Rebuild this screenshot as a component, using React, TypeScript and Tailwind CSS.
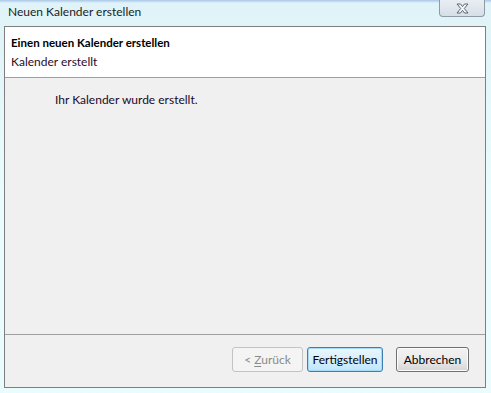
const FONT = { fontFamily: '"Segoe UI", Lato, "Noto Sans", sans-serif' }

function CloseIcon() {
  return (
    <svg width="13" height="11" viewBox="0 0 13 11">
      <path d="M1 1 L4.5 1 L6.5 3.6 L8.5 1 L12 1 L8.3 5.5 L12 10 L8.5 10 L6.5 7.4 L4.5 10 L1 10 L4.7 5.5 Z"
        fill="#f4f7f9" stroke="#5b6470" strokeWidth="1" strokeLinejoin="round" />
    </svg>
  )
}

export default function App() {
  return (
    <div className="relative w-[491px] h-[393px] overflow-hidden bg-gradient-to-b from-[#dff3f8] via-[#eafcfd] to-[#eafcfd] text-[12px] text-[#1e1e1e]" style={FONT}>
      {/* top glass strip */}
      <div className="absolute left-0 top-0 w-full h-[3px] bg-gradient-to-b from-[#a9c6e6] to-transparent" />

      {/* Title bar */}
      <div className="relative h-[26px] flex items-start">
        <span className="ml-[8px] mt-[3px] leading-[18px] text-[#1c1c1c]">Neuen Kalender erstellen</span>
        <div className="ml-auto mr-[6px] w-[46px] h-[17px] rounded-b-[4px] border border-t-0 border-[#8e9aa6] bg-gradient-to-b from-[#e8eef3] to-[#d6dee6] flex items-center justify-center">
          <CloseIcon />
        </div>
      </div>

      {/* Dialog body */}
      <div className="ml-[4px] w-[482px] h-[362px] border border-[#7f7f7f] flex flex-col bg-[#f0f0f0]">
        <div className="h-[51px] bg-white border-b border-[#a0a0a0] pl-[6px] pt-[6px]">
          <div className="font-bold text-[11.5px] leading-[20px] text-black">Einen neuen Kalender erstellen</div>
          <div className="leading-[18px] text-[#2a0a30]">Kalender erstellt</div>
        </div>

        <div className="flex-1 pl-[50px] pt-[13px]">
          <div className="leading-[18px] text-[#1a0a2a]">Ihr Kalender wurde erstellt.</div>
        </div>

        <div className="h-[53px] border-t border-[#a0a0a0] flex items-start justify-end pr-[16px] pt-[12px]">
          <button className="w-[71px] h-[25px] rounded-[3px] border border-[#c3c3c3] bg-[#f4f4f4] text-[#8a8a8a] leading-none">
            &lt; <span className="underline underline-offset-2">Z</span>urück
          </button>
          <button className="ml-[4px] w-[76px] h-[25px] rounded-[3px] border border-[#3c7fb1] bg-gradient-to-b from-[#eaf6fd] via-[#d9effc] to-[#bee6fd] shadow-[inset_0_0_0_1px_#a7d9f5] text-black leading-none">
            Fertigstellen
          </button>
          <button className="ml-[13px] w-[73px] h-[25px] rounded-[3px] border border-[#707070] bg-gradient-to-b from-[#f2f2f2] via-[#ebebeb] to-[#d6d6d6] shadow-[inset_0_0_0_1px_#fcfcfc] text-black leading-none">
            Abbrechen
          </button>
        </div>
      </div>
    </div>
  )
}
